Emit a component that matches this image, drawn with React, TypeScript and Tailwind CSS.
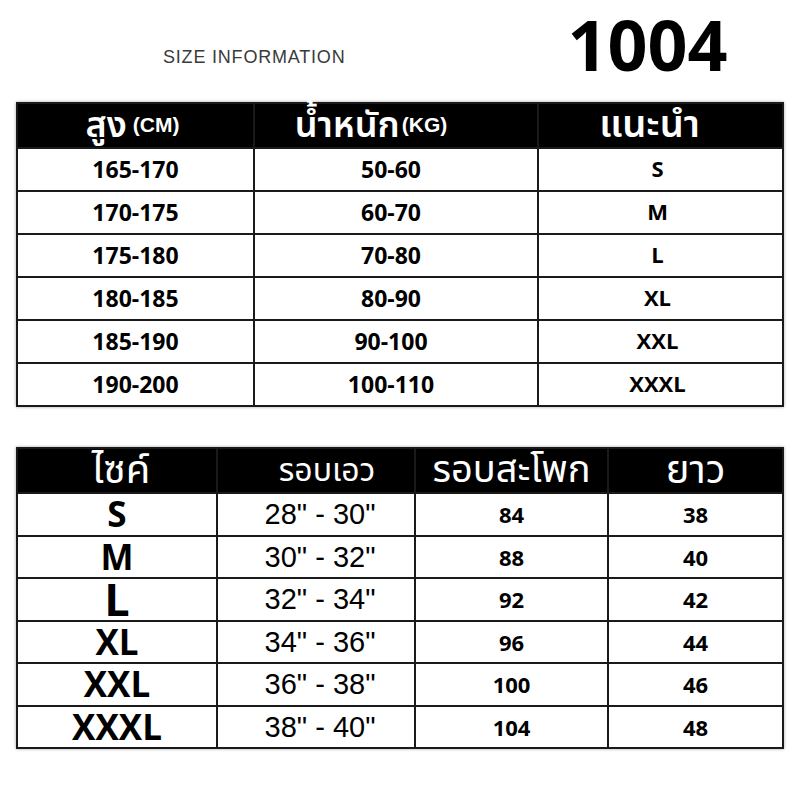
const sizeRows = [
  { height: '165-170', weight: '50-60', size: 'S' },
  { height: '170-175', weight: '60-70', size: 'M' },
  { height: '175-180', weight: '70-80', size: 'L' },
  { height: '180-185', weight: '80-90', size: 'XL' },
  { height: '185-190', weight: '90-100', size: 'XXL' },
  { height: '190-200', weight: '100-110', size: 'XXXL' },
];

const measureRows = [
  { size: 'S', waist: '28" - 30"', hip: '84', length: '38' },
  { size: 'M', waist: '30" - 32"', hip: '88', length: '40' },
  { size: 'L', waist: '32" - 34"', hip: '92', length: '42' },
  { size: 'XL', waist: '34" - 36"', hip: '96', length: '44' },
  { size: 'XXL', waist: '36" - 38"', hip: '100', length: '46' },
  { size: 'XXXL', waist: '38" - 40"', hip: '104', length: '48' },
];

const thai = "font-['Noto_Sans_Thai','Noto_Sans','Open_Sans',sans-serif]";
const cell = 'border-2 border-[#1a1a1a] p-0 text-center align-middle';

export default function App() {
  return (
    <div className="w-[800px] h-[800px] bg-white px-[16px] font-['Open_Sans',sans-serif] text-black">
      <div className="flex items-start h-[102px]">
        <p className="ml-[147px] mt-[48px] text-[18px] leading-[18px] tracking-[0.8px] text-[#3a3a3a] font-['Liberation_Sans',Arial,sans-serif]">
          SIZE INFORMATION
        </p>
        <p className="ml-[222px] mt-[3px] text-[70px] leading-[82px] font-bold">1004</p>
      </div>

      <table className="table-fixed w-[766px] border-collapse shadow-[0_0_3px_rgba(0,0,0,0.35)]">
        <colgroup>
          <col className="w-[237px]" />
          <col className="w-[284px]" />
          <col className="w-[245px]" />
        </colgroup>
        <thead>
          <tr className="h-[45px] bg-black text-white leading-none">
            <th className={`${cell} font-normal pr-[6px]`}>
              <span className={`${thai} text-[36px] leading-none font-semibold`}>สูง</span>
              <span className="ml-[6px] text-[21px] font-bold font-['Liberation_Sans',Arial,sans-serif] align-[5px]">(CM)</span>
            </th>
            <th className={`${cell} font-normal pr-[50px]`}>
              <span className={`${thai} text-[36px] leading-none font-semibold`}>น้ำหนัก</span>
              <span className="ml-[2px] text-[21px] font-bold font-['Liberation_Sans',Arial,sans-serif] align-[5px]">(KG)</span>
            </th>
            <th className={`${cell} font-normal pr-[22px]`}>
              <span className={`${thai} text-[38px] leading-none font-semibold`}>แนะนำ</span>
            </th>
          </tr>
        </thead>
        <tbody>
          {sizeRows.map((r) => (
            <tr key={r.height} className="h-[43px] text-[23px] leading-none font-bold">
              <td className={cell}>{r.height}</td>
              <td className={`${cell} pr-[10px]`}>{r.weight}</td>
              <td className={`${cell} pr-[6px] pb-[4px] text-[22px]`}>{r.size}</td>
            </tr>
          ))}
        </tbody>
      </table>

      <table className="mt-[40px] table-fixed w-[766px] border-collapse shadow-[0_0_3px_rgba(0,0,0,0.35)]">
        <colgroup>
          <col className="w-[200px]" />
          <col className="w-[198px]" />
          <col className="w-[193px]" />
          <col className="w-[175px]" />
        </colgroup>
        <thead>
          <tr className={`h-[45px] bg-black text-white ${thai} text-[40px] leading-none font-normal`}>
            <th className={`${cell} font-normal pl-[8px]`}>ไซค์</th>
            <th className={`${cell} font-normal pl-[22px] text-[32px]`}>รอบเอว</th>
            <th className={`${cell} font-normal text-[38px]`}>รอบสะโพก</th>
            <th className={`${cell} font-normal`}>ยาว</th>
          </tr>
        </thead>
        <tbody>
          {measureRows.map((r) => (
            <tr key={r.size} className="h-[42.5px] text-[22px] leading-[30px] font-bold">
              <td className={`${cell} ${r.size === 'L' ? 'text-[45px]' : 'text-[35px]'}`}>
                <span className="block h-[34px] leading-[34px]">{r.size}</span>
              </td>
              <td className={`${cell} pl-[8px] text-[29px] font-normal font-['Liberation_Sans_Narrow','Liberation_Sans',sans-serif] whitespace-pre`}>
                {r.waist}
              </td>
              <td className={cell}>{r.hip}</td>
              <td className={cell}>{r.length}</td>
            </tr>
          ))}
        </tbody>
      </table>
    </div>
  );
}
